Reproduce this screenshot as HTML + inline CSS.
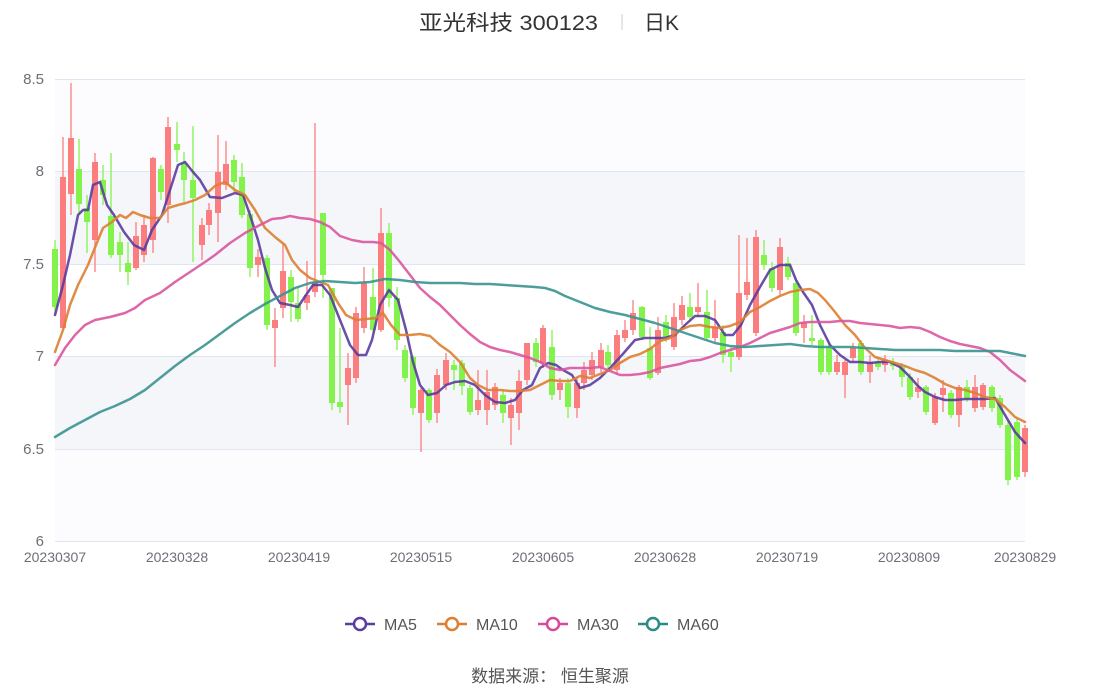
<!DOCTYPE html>
<html><head><meta charset="utf-8"><style>
body{margin:0;background:#fff;width:1101px;height:689px;overflow:hidden;font-family:"Liberation Sans","Noto Sans CJK SC",sans-serif;}
</style></head><body>
<svg id="s" width="1101" height="689" xmlns="http://www.w3.org/2000/svg" style="position:absolute;left:0;top:0">
<rect x="55" y="79" width="970" height="92" fill="#fcfcfe"/>
<rect x="55" y="171" width="970" height="93" fill="#f5f6fa"/>
<rect x="55" y="264" width="970" height="92" fill="#ffffff"/>
<rect x="55" y="356" width="970" height="93" fill="#f5f6fa"/>
<rect x="55" y="449" width="970" height="92" fill="#fcfcfe"/>
<g stroke="#e0e6f1" stroke-width="1">
<line x1="55" y1="79.5" x2="1025" y2="79.5"/><line x1="55" y1="171.5" x2="1025" y2="171.5"/>
<line x1="55" y1="264.5" x2="1025" y2="264.5"/><line x1="55" y1="356.5" x2="1025" y2="356.5"/>
<line x1="55" y1="449.5" x2="1025" y2="449.5"/><line x1="55" y1="541.5" x2="1025" y2="541.5"/>
</g>
<g fill="#6e7079" font-size="15" text-anchor="end">
<text x="44" y="84">8.5</text><text x="44" y="176">8</text><text x="44" y="269">7.5</text>
<text x="44" y="361">7</text><text x="44" y="454">6.5</text><text x="44" y="546">6</text>
</g>
<g fill="#6e7079" font-size="14" text-anchor="middle">
<text x="55" y="562">20230307</text><text x="177" y="562">20230328</text><text x="299" y="562">20230419</text>
<text x="421" y="562">20230515</text><text x="543" y="562">20230605</text><text x="665" y="562">20230628</text>
<text x="787" y="562">20230719</text><text x="909" y="562">20230809</text><text x="1025" y="562">20230829</text>
</g>
<g id="c"></g><g id="l" fill="none" stroke-width="2.5" stroke-linejoin="round" stroke-linecap="round"></g>
<text x="419" y="30" font-size="21" fill="#333" textLength="179" lengthAdjust="spacingAndGlyphs">亚光科技 300123</text>
<line x1="622" y1="14" x2="622" y2="30" stroke="#ccc"/>
<text x="644" y="30" font-size="21" fill="#333">日K</text>
<g font-size="16" fill="#555">
<line x1="345" y1="624" x2="375" y2="624" stroke="#5b3c9e" stroke-width="2.5"/><circle cx="360" cy="624" r="6" fill="#fff" stroke="#5b3c9e" stroke-width="2.5"/><text x="384" y="630">MA5</text>
<line x1="437" y1="624" x2="467" y2="624" stroke="#dd7f33" stroke-width="2.5"/><circle cx="452" cy="624" r="6" fill="#fff" stroke="#dd7f33" stroke-width="2.5"/><text x="476" y="630">MA10</text>
<line x1="538" y1="624" x2="568" y2="624" stroke="#d9489a" stroke-width="2.5"/><circle cx="553" cy="624" r="6" fill="#fff" stroke="#d9489a" stroke-width="2.5"/><text x="577" y="630">MA30</text>
<line x1="638" y1="624" x2="668" y2="624" stroke="#2c8a86" stroke-width="2.5"/><circle cx="653" cy="624" r="6" fill="#fff" stroke="#2c8a86" stroke-width="2.5"/><text x="677" y="630">MA60</text>
</g>
<text x="550" y="682" font-size="17" fill="#555" text-anchor="middle">数据来源：  恒生聚源</text>
</svg>
<script>
var C=[[55,249,307,240,315,'g'],[63,177,328,137,328,'r'],[71,138,194,83,215,'r'],[79,169,204,139,215,'g'],[87,208,222,195,253,'g'],[95,162,240,153,272,'r'],[103,180,195,165,205,'g'],[111,216,255,153,258,'g'],[120,242,255,232,272,'g'],[128,263,272,242,285,'g'],[136,236,268,222,270,'r'],[144,225,255,215,262,'r'],[153,158,240,157,253,'r'],[161,169,192,165,200,'g'],[168,127,205,117,223,'r'],[177,144,150,122,162,'g'],[184,163,180,152,202,'g'],[193,180,198,126,262,'g'],[202,225,245,218,260,'r'],[209,210,225,203,235,'r'],[218,172,213,135,242,'r'],[226,164,185,141,190,'r'],[234,160,182,155,192,'g'],[242,177,215,163,218,'g'],[250,214,268,210,277,'g'],[258,257,265,249,277,'r'],[267,258,325,255,330,'g'],[275,320,328,308,367,'r'],[283,271,308,243,318,'r'],[291,277,302,270,322,'g'],[298,303,319,287,322,'g'],[307,295,303,261,310,'r'],[315,282,292,123,297,'r'],[323,213,275,213,298,'g'],[332,288,403,288,410,'g'],[340,402,407,328,413,'g'],[348,368,385,353,425,'r'],[356,313,378,307,383,'r'],[364,283,328,267,333,'r'],[373,297,330,268,333,'g'],[381,233,330,208,332,'r'],[389,233,298,223,307,'g'],[397,298,340,287,350,'g'],[405,350,378,345,382,'g'],[413,357,408,355,415,'g'],[421,390,413,388,452,'r'],[429,390,420,388,423,'g'],[437,375,413,369,423,'r'],[446,360,385,353,390,'r'],[454,365,370,360,390,'g'],[462,363,386,360,395,'g'],[470,388,412,385,415,'g'],[478,400,410,370,415,'r'],[487,392,410,370,425,'r'],[495,387,405,383,410,'r'],[503,395,413,390,423,'g'],[511,405,418,398,445,'r'],[519,381,413,370,430,'r'],[527,343,380,343,385,'r'],[536,343,362,338,367,'g'],[543,328,363,325,368,'r'],[552,347,395,330,400,'g'],[560,383,390,378,400,'r'],[568,383,407,378,418,'g'],[577,383,408,377,418,'r'],[584,370,383,362,390,'r'],[592,360,375,352,380,'r'],[601,350,367,343,372,'r'],[608,352,365,345,370,'g'],[617,335,370,330,375,'r'],[625,330,338,320,342,'r'],[633,313,330,300,335,'r'],[642,307,337,306,340,'g'],[650,348,378,327,380,'g'],[658,330,373,317,375,'r'],[666,322,337,315,342,'g'],[674,317,347,303,350,'r'],[682,305,320,296,325,'r'],[690,307,317,293,322,'g'],[698,307,312,283,317,'r'],[707,312,338,290,340,'g'],[715,327,338,300,342,'r'],[723,332,355,325,363,'g'],[731,352,357,345,372,'g'],[739,293,357,235,360,'r'],[747,282,295,238,300,'r'],[756,237,333,230,336,'r'],[764,255,265,240,270,'g'],[772,268,288,262,292,'g'],[780,247,290,238,295,'r'],[788,263,277,257,280,'g'],[796,283,333,280,336,'g'],[804,323,328,315,343,'r'],[812,338,341,315,345,'g'],[821,340,372,338,375,'g'],[829,347,372,343,375,'g'],[837,362,372,355,375,'r'],[845,362,375,360,398,'r'],[853,348,358,343,362,'r'],[861,343,372,340,375,'g'],[870,362,372,355,383,'r'],[878,362,367,357,370,'g'],[885,360,365,355,372,'r'],[893,362,366,358,370,'g'],[902,367,377,363,387,'g'],[910,377,397,373,400,'g'],[918,387,392,378,398,'r'],[926,387,412,385,415,'g'],[935,397,423,393,425,'r'],[943,388,395,380,412,'r'],[951,393,415,390,418,'g'],[959,387,415,385,427,'r'],[967,387,398,380,402,'g'],[975,387,408,375,412,'r'],[983,385,407,383,410,'r'],[992,387,408,385,412,'g'],[1000,398,425,395,428,'g'],[1008,425,480,420,485,'g'],[1017,422,477,418,480,'g'],[1025,428,472,425,477,'r']];
var h='';C.forEach(function(c){var col=c[5]=='r'?'#fb7d7d':'#83f34c';
h+='<line x1="'+c[0]+'" x2="'+c[0]+'" y1="'+c[3]+'" y2="'+c[4]+'" stroke="'+col+'" stroke-width="1.3"/>';
h+='<rect x="'+(c[0]-3)+'" y="'+c[1]+'" width="6" height="'+Math.max(2,c[2]-c[1])+'" fill="'+col+'"/>';});
document.getElementById('c').innerHTML=h;
var L={'#5b3c9e':[55,315,63,285,70,255,78,215,83,210,88,210,93,185,100,182,107,205,114,215,124,232,134,245,144,250,152,230,162,215,170,190,178,165,185,162,193,172,200,180,210,197,222,198,235,193,243,195,250,215,258,240,265,268,272,290,280,303,290,305,298,307,306,295,313,285,322,285,330,295,340,320,350,345,358,355,366,355,372,340,380,305,389,290,398,300,406,330,413,362,420,385,428,395,437,393,446,385,455,382,465,381,475,385,485,395,495,402,505,403,515,400,523,390,532,385,540,368,548,363,556,365,563,370,572,375,580,388,590,385,600,378,610,368,622,355,635,340,645,338,655,338,665,338,675,335,685,325,695,316,705,316,715,320,725,335,733,335,741,325,750,305,760,287,770,270,780,265,790,265,796,280,803,292,812,305,820,325,830,345,840,355,850,362,860,362,870,363,880,362,890,362,900,367,910,377,918,386,925,392,935,397,945,400,955,400,965,399,975,399,985,399,995,398,1005,415,1015,432,1025,443],
'#dd7f33':[55,352,63,330,70,305,78,285,88,265,96,245,103,228,112,222,120,215,126,218,133,212,140,215,150,218,160,218,168,208,178,205,186,203,195,200,205,195,215,186,225,182,235,190,245,195,255,210,265,228,275,237,285,245,292,260,300,270,310,278,320,282,328,285,338,303,346,315,356,320,366,319,376,318,383,313,391,325,400,335,410,335,420,334,430,336,440,345,450,352,460,362,470,378,478,385,488,390,500,390,510,391,520,391,530,390,540,385,550,380,560,381,570,381,580,376,590,378,600,374,610,370,620,363,630,357,640,354,650,349,660,341,670,338,680,330,690,326,700,325,710,327,720,328,730,326,740,322,750,312,760,307,770,301,780,296,790,292,800,290,810,289,818,293,825,300,835,312,845,325,855,335,865,348,875,357,885,360,895,363,905,366,915,370,925,373,935,378,945,384,955,388,965,390,975,393,985,397,995,399,1005,407,1015,417,1025,422],
'#d9569f':[55,365,65,348,75,335,85,325,95,320,110,317,125,313,135,308,145,300,160,293,175,282,190,272,205,262,215,255,230,243,245,233,260,225,272,219,282,218,290,216,300,218,310,219,320,222,330,227,340,236,352,240,363,242,373,242,381,243,390,250,400,262,410,275,420,288,430,297,440,305,450,315,460,325,470,334,480,342,490,347,500,350,510,352,520,355,530,358,540,362,550,368,560,370,570,368,580,368,590,368,600,367,610,371,620,375,630,375,640,374,650,372,660,368,670,366,680,364,690,361,700,360,710,357,720,353,730,350,740,347,750,343,760,338,770,333,780,330,790,327,800,323,810,322,820,322,830,322,840,321,850,321,860,323,870,324,880,325,890,326,900,328,910,327,920,328,930,332,940,337,950,341,960,344,970,346,980,348,990,352,1000,360,1010,370,1025,381],
'#3a9490':[55,437,70,428,85,420,100,412,115,406,130,399,145,390,160,378,175,366,190,355,205,345,220,334,235,323,250,313,265,304,280,296,295,288,310,283,325,281,340,282,355,283,370,282,385,279,400,280,415,282,430,283,445,283,460,283,475,284,490,284,505,285,520,286,535,287,545,288,555,291,565,296,580,302,595,308,610,312,625,315,640,319,655,323,670,328,685,333,700,338,715,343,730,346,745,347,760,346,775,345,790,344,805,346,820,347,835,347,850,347,865,348,880,349,895,350,910,350,925,350,940,350,955,351,970,351,985,351,1000,351,1010,353,1025,356]};
var g='';for(var k in L){var a=L[k],p='';for(var i=0;i<a.length;i+=2)p+=a[i]+','+a[i+1]+' ';g+='<polyline points="'+p+'" stroke="'+k+'" stroke-opacity="0.9"/>';}
document.getElementById('l').innerHTML=g;
</script>
</body></html>
